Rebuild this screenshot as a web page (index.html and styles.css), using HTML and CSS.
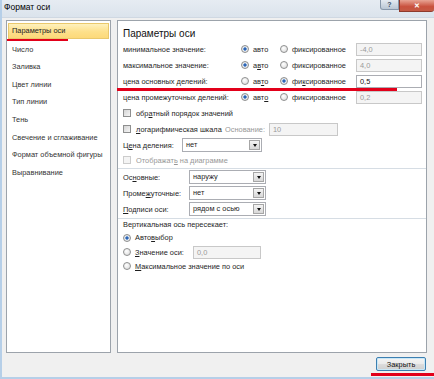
FILE: index.html
```html
<!DOCTYPE html>
<html lang="ru">
<head>
  <meta charset="UTF-8">
  <title>Формат оси</title>
  <link rel="stylesheet" href="styles.css">
</head>
<body>
  <div class="window">
    <div class="titlebar">
      <span class="title">Формат оси</span>
      <div class="controls">
        <span class="btn-help">?</span>
        <span class="btn-close">&#x2715;</span>
      </div>
    </div>

    <div class="main">
      <ul class="nav">
        <li class="active">Параметры оси</li>
        <li>Число</li>
        <li>Заливка</li>
        <li>Цвет линии</li>
        <li>Тип линии</li>
        <li>Тень</li>
        <li>Свечение и сглаживание</li>
        <li>Формат объемной фигуры</li>
        <li>Выравнивание</li>
      </ul>

      <div class="pane">
        <div class="pane-title">Параметры оси</div>

        <div class="opt-row">
          <span>минимальное значение:</span>
          <span class="radio on"></span><span>авто</span>
          <span class="radio"></span><span>фиксированное</span>
          <span class="field disabled">-4,0</span>
        </div>
        <div class="opt-row">
          <span>макcимальное значение:</span>
          <span class="radio on"></span><span>а<u>в</u>то</span>
          <span class="radio"></span><span>фиксированное</span>
          <span class="field disabled">4,0</span>
        </div>
        <div class="opt-row">
          <span>цена основных делений:</span>
          <span class="radio"></span><span>ав<u>т</u>о</span>
          <span class="radio on"></span><span>фи<u>к</u>сированное</span>
          <span class="field">0,5</span>
        </div>
        <div class="opt-row">
          <span>цена промежуточных делений:</span>
          <span class="radio on"></span><span>авт<u>о</u></span>
          <span class="radio"></span><span>фиксированное</span>
          <span class="field disabled">0,2</span>
        </div>

        <div class="check-row">
          <span class="box"></span>
          <span>обр<u>а</u>тный порядок значений</span>
        </div>
        <div class="check-row log-row">
          <span class="box"></span>
          <span><u>л</u>огарифмическая шкала</span>
          <span class="muted">Основание:</span>
          <span class="field disabled">10</span>
        </div>
        <div class="sel-row tick-row">
          <span>Ц<u>е</u>на деления:</span>
          <span class="select"><span class="value">нет</span><span class="arrow"></span></span>
        </div>
        <div class="check-row short">
          <span class="box disabled"></span>
          <span class="muted">Отображат<u>ь</u> на диаграмме</span>
        </div>

        <div class="sep"></div>

        <div class="sel-row">
          <span>Ос<u>н</u>овные:</span>
          <span class="select"><span class="value">наружу</span><span class="arrow"></span></span>
        </div>
        <div class="sel-row">
          <span>Проме<u>ж</u>уточные:</span>
          <span class="select"><span class="value">нет</span><span class="arrow"></span></span>
        </div>
        <div class="sel-row">
          <span><u>П</u>одписи оси:</span>
          <span class="select"><span class="value">рядом с осью</span><span class="arrow"></span></span>
        </div>

        <div class="sep"></div>

        <div class="cross-title">Вертикальная ось пересекает:</div>
        <div class="cross-row auto">
          <span class="radio on"></span>
          <span>Авто<u>в</u>ыбор</span>
        </div>
        <div class="cross-row value-row">
          <span class="radio"></span>
          <span><u>З</u>начение оси:</span>
          <span class="field disabled">0,0</span>
        </div>
        <div class="cross-row last">
          <span class="radio"></span>
          <span><u>М</u>аксимальное значение по оси</span>
        </div>
      </div>
    </div>

    <div class="footer">
      <button class="close-btn">Закрыть</button>
    </div>

    <span class="mark mark-nav"></span>
    <span class="mark mark-row"></span>
    <span class="mark mark-btn"></span>
  </div>
</body>
</html>
```

FILE: styles.css
```css
body {
  margin: 0;
  font-family: 'Liberation Sans', Arial, sans-serif;
  font-size: 7.4px;
  color: #1e1e1e;
  background: #f0f0f0;
}

.window {
  position: relative;
  width: 434px;
  height: 379px;
  box-sizing: border-box;
  background: #f0f0f0;
  border-left: 2px solid #b6cfe8;
  border-bottom: 2px solid #b6cfe8;
  display: flex;
  flex-direction: column;
  overflow: hidden;
}

/* title bar */
.titlebar {
  height: 18px;
  flex: none;
  display: flex;
  align-items: flex-start;
  background: linear-gradient(#e6ecf2, #dbe3ec);
  border-bottom: 1px solid #cfd8e2;
  box-sizing: border-box;
}

.title {
  font-size: 8.5px;
  line-height: 14px;
  padding-left: 2px;
  color: #000;
}

.controls {
  margin-left: auto;
  display: flex;
  align-items: flex-start;
}

.btn-help {
  width: 19px;
  height: 10px;
  box-sizing: border-box;
  background: linear-gradient(#e4eaf1, #b9c6d4);
  border: 1px solid #8797aa;
  border-top: none;
  border-radius: 0 0 0 3px;
  font-size: 7px;
  font-weight: bold;
  line-height: 9px;
  text-align: center;
  color: #3c4f66;
}

.btn-close {
  width: 35px;
  height: 12px;
  box-sizing: border-box;
  background: linear-gradient(#e8a494, #c9513e 60%, #c45a44);
  border: 1px solid #8e3a2c;
  border-top: none;
  border-right: none;
  border-radius: 0 0 3px 0;
  color: #fff;
  font-size: 7px;
  font-weight: bold;
  line-height: 11px;
  text-align: center;
}

/* body */
.main {
  flex: none;
  height: 335px;
  box-sizing: border-box;
  display: flex;
  gap: 6px;
  padding: 2px 7px 0 4px;
}

.nav {
  width: 105px;
  flex: none;
  box-sizing: border-box;
  margin: 0;
  padding: 2px 0 0;
  list-style: none;
  background: #fff;
  border: 1px solid #9ca3ab;
}

.nav li {
  height: 17.6px;
  line-height: 17.6px;
  margin: 0 1px;
  padding-left: 4px;
  color: #333;
  white-space: nowrap;
}

.nav li.active {
  height: 16px;
  line-height: 16px;
  margin-bottom: 1.6px;
  background: linear-gradient(#fef3c4, #fde08a 55%, #fcd877);
  box-shadow: inset 0 0 0 1px #e9c86c;
  color: #222;
}

.pane {
  flex: 1;
  box-sizing: border-box;
  background: #fff;
  border: 1px solid #9ca3ab;
  padding: 6px 0 0 5px;
}

.pane-title {
  height: 14px;
  line-height: 14px;
  font-size: 10px;
  color: #111;
}

u {
  text-decoration: underline;
}

.opt-row {
  display: grid;
  grid-template-columns: 118px 12px 27px 12px 64px 66px;
  align-items: center;
  height: 16px;
  white-space: nowrap;
}

.check-row {
  display: flex;
  align-items: center;
  gap: 5px;
  height: 16px;
  white-space: nowrap;
}

.check-row.short {
  height: 14px;
}

.log-row {
  display: grid;
  grid-template-columns: 8px 94px 44px 69px;
  column-gap: 0;
}

.log-row .box {
  margin-right: 0;
}

.log-row > span:nth-child(2) {
  padding-left: 5px;
}

.sel-row {
  display: grid;
  grid-template-columns: 66px 77px;
  align-items: center;
  height: 16px;
  white-space: nowrap;
}

.tick-row {
  grid-template-columns: 59px 80px;
}

.sep {
  height: 1px;
  margin: 1px 0 0 -5px;
  background: #d6dde4;
}

.cross-title {
  height: 12px;
  line-height: 12px;
}

.cross-row {
  display: grid;
  grid-template-columns: 12px 58px 68px;
  align-items: center;
  white-space: nowrap;
}

.cross-row.auto {
  height: 13px;
}

.cross-row.value-row {
  height: 16px;
}

.cross-row.last {
  height: 12px;
}

.muted {
  color: #979797;
}

/* controls */
.radio {
  width: 8px;
  height: 8px;
  box-sizing: border-box;
  border-radius: 50%;
  border: 1px solid #8e8f8f;
  background: radial-gradient(circle at 40% 35%, #ffffff, #d6d6d6);
}

.radio.on {
  background: radial-gradient(circle, #1f4f9a 0, #3d78c8 32%, #eef0f2 48%, #d2d2d2 100%);
}

.box {
  width: 8px;
  height: 8px;
  flex: none;
  box-sizing: border-box;
  border: 1px solid #8e8f8f;
  background: linear-gradient(135deg, #d4d4d4, #f6f6f6);
}

.box.disabled {
  border-color: #cccccc;
  background: #f4f4f4;
}

.field {
  height: 13px;
  line-height: 11px;
  box-sizing: border-box;
  border: 1px solid #abadb3;
  background: #fff;
  padding-left: 3px;
  color: #111;
}

.field.disabled {
  border-color: #c8c8c8;
  background: #f4f4f4;
  color: #9a9a9a;
}

.select {
  display: flex;
  height: 14px;
  box-sizing: border-box;
  border: 1px solid #abadb3;
  background: #fff;
}

.select .value {
  flex: 1;
  line-height: 12px;
  padding-left: 3px;
}

.select .arrow {
  width: 11px;
  margin: 1px;
  box-sizing: border-box;
  border: 1px solid #a6a6a6;
  background: linear-gradient(#f4f4f4, #d8d8d8);
  display: flex;
  align-items: center;
  justify-content: center;
}

.select .arrow::after {
  content: '';
  border-left: 2.5px solid transparent;
  border-right: 2.5px solid transparent;
  border-top: 3px solid #111;
}

/* footer */
.footer {
  flex: 1;
  display: flex;
  justify-content: flex-end;
  align-items: flex-start;
  padding: 4px 8px 0 0;
}

.close-btn {
  width: 50px;
  height: 14px;
  padding: 0;
  font: inherit;
  color: #111;
  background: linear-gradient(#f4f4f4, #ebebeb 48%, #dcdcdc 52%, #cfcfcf);
  border: 1px solid #3c7fb1;
  border-radius: 2px;
  box-shadow: inset 0 0 0 1px #c8e7f7;
}

/* red annotation marks */
.mark {
  position: absolute;
  background: #e2001a;
}

.mark-nav {
  left: 5px;
  top: 39px;
  width: 61px;
  height: 2px;
}

.mark-row {
  left: 115px;
  top: 88px;
  width: 280px;
  height: 3px;
}

.mark-btn {
  left: 369px;
  top: 373px;
  width: 63px;
  height: 3px;
}
```
